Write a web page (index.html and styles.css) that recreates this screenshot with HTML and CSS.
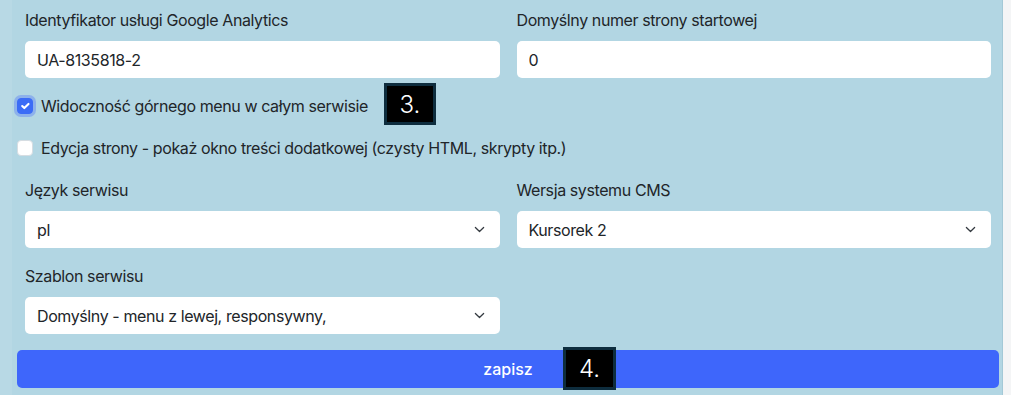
FILE: index.html
```html
<!DOCTYPE html>
<html lang="pl">
<head>
    <meta charset="UTF-8">
    <meta name="viewport" content="width=device-width, initial-scale=1.0">
    <title>Ustawienia serwisu</title>
    <link rel="stylesheet" href="styles.css">
</head>
<body>
    <div class="panel">
        <form class="settings">
            <div class="row">
                <div class="field">
                    <label class="label" for="ga">Identyfikator usługi Google Analytics</label>
                    <input class="control" type="text" id="ga" value="UA-8135818-2">
                </div>
                <div class="field">
                    <label class="label" for="start">Domyślny numer strony startowej</label>
                    <input class="control" type="text" id="start" value="0">
                </div>
            </div>

            <div class="check first">
                <input class="box" type="checkbox" id="topmenu" checked>
                <label for="topmenu">Widoczność górnego menu w całym serwisie</label>
                <span class="badge">3.</span>
            </div>
            <div class="check">
                <input class="box" type="checkbox" id="extra">
                <label for="extra">Edycja strony - pokaż okno treści dodatkowej (czysty HTML, skrypty itp.)</label>
            </div>

            <div class="row lang">
                <div class="field">
                    <label class="label" for="lang">Język serwisu</label>
                    <select class="control select" id="lang">
                        <option>pl</option>
                        <option>en</option>
                    </select>
                </div>
                <div class="field">
                    <label class="label" for="cms">Wersja systemu CMS</label>
                    <select class="control select" id="cms">
                        <option>Kursorek 2</option>
                    </select>
                </div>
            </div>

            <div class="row next">
                <div class="field">
                    <label class="label" for="tpl">Szablon serwisu</label>
                    <select class="control select" id="tpl">
                        <option>Domyślny - menu z lewej, responsywny,</option>
                    </select>
                </div>
                <div class="field"></div>
            </div>

            <div class="save">
                <button class="button" type="button">zapisz</button>
                <span class="badge badge-save">4.</span>
            </div>
        </form>
    </div>
</body>
</html>
```

FILE: styles.css
```css
body {
    margin: 0;
    padding: 0;
    background-color: #f4f5f6;
    font-family: Inter, "Liberation Sans", Arial, sans-serif;
    font-size: 16px;
    color: #212529;
}
.panel {
    width: 990px;
    height: 395px;
    background-color: #b2d6e3;
    border-left: 12px solid #b8d9e5;
    border-right: 1px solid #a3c9d7;
    box-sizing: content-box;
    overflow: hidden;
}
.settings {
    padding: 8px 3px 0 5px;
}
.row {
    display: flex;
    gap: 17px;
    margin: 0 8px;
}
.row.lang {
    margin-top: 9px;
}
.row.next {
    margin-top: 16px;
}
.field {
    flex: 1;
    display: flex;
    flex-direction: column;
}
.label {
    line-height: 24px;
    margin-bottom: 9px;
    letter-spacing: -0.4px;
}
.control {
    height: 37px;
    box-sizing: border-box;
    border: none;
    border-radius: 5px;
    background-color: #fff;
    padding: 0 12px;
    font-family: inherit;
    font-size: 16px;
    color: #212529;
    letter-spacing: -0.4px;
}
.select {
    appearance: none;
    -webkit-appearance: none;
    background-image: url("data:image/svg+xml,%3csvg xmlns='http://www.w3.org/2000/svg' viewBox='0 0 16 16'%3e%3cpath fill='none' stroke='%23343a40' stroke-linecap='round' stroke-linejoin='round' stroke-width='1.8' d='M2 5l6 6 6-6'/%3e%3c/svg%3e");
    background-repeat: no-repeat;
    background-position: right 13px center;
    background-size: 15px 11px;
}
.check {
    display: flex;
    align-items: center;
    height: 42px;
    letter-spacing: -0.4px;
}
.check.first {
    margin-top: 7px;
}
.box {
    appearance: none;
    -webkit-appearance: none;
    width: 16px;
    height: 16px;
    margin: 0 8px 0 0;
    border-radius: 4px;
    background-color: #fff;
    border: 1px solid #d6dde2;
}
.box:checked {
    background-color: #3b6cf6;
    border-color: #3b6cf6;
    box-shadow: 0 0 0 3px rgba(72, 110, 250, 0.35);
    background-image: url("data:image/svg+xml,%3csvg xmlns='http://www.w3.org/2000/svg' viewBox='0 0 20 20'%3e%3cpath fill='none' stroke='%23fff' stroke-linecap='round' stroke-linejoin='round' stroke-width='3' d='M6 10l3 3 6-6'/%3e%3c/svg%3e");
    background-size: 100% 100%;
}
.badge {
    display: inline-flex;
    align-items: center;
    justify-content: center;
    box-sizing: border-box;
    width: 52px;
    height: 42px;
    margin-left: 16px;
    background-color: #000;
    border: 3px solid #0e2d3e;
    color: #fff;
    font-size: 24px;
    font-weight: 300;
    letter-spacing: 0;
}
.check.first .badge {
    position: relative;
    top: -2px;
}
.save {
    position: relative;
    margin-top: 16px;
}
.button {
    display: block;
    width: 982px;
    height: 38px;
    border: none;
    border-radius: 5px;
    background-color: #3e66fb;
    color: #fff;
    font-family: inherit;
    font-size: 16px;
    font-weight: 500;
    cursor: pointer;
}
.badge-save {
    position: absolute;
    left: 546px;
    top: -3px;
    margin: 0;
    width: 53px;
    height: 43px;
}
```
